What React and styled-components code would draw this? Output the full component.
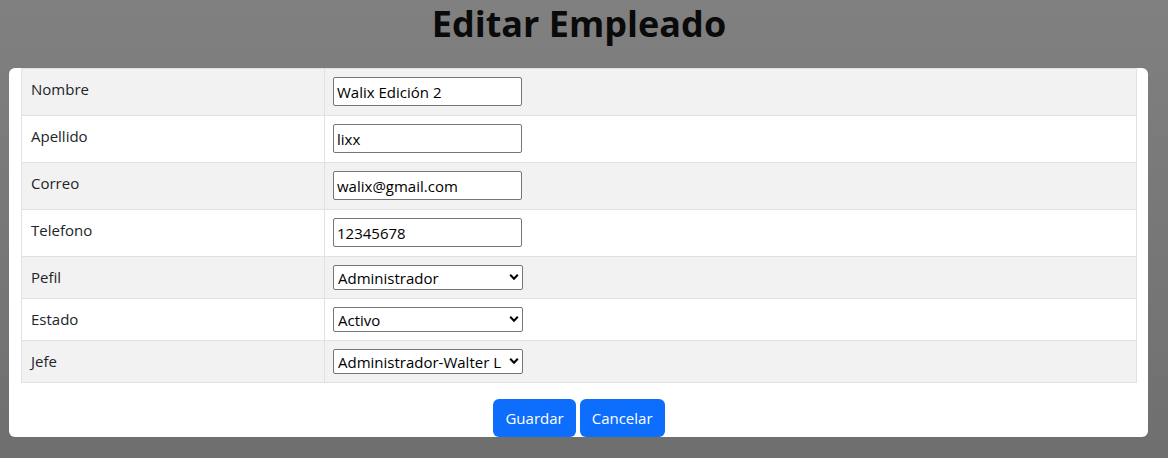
import React from "react";
import styled, { createGlobalStyle } from "styled-components";

const Global = createGlobalStyle`
  html, body { margin: 0; padding: 0; }
  body {
    font-family: "Open Sans", "Noto Sans", "Liberation Sans", sans-serif;
    font-size: 16px;
    color: #212529;
  }
  * { box-sizing: border-box; }
`;

const Backdrop = styled.div`
  width: 1168px;
  height: 458px;
  background: linear-gradient(180deg, #808080 0%, #6f6f6f 100%);
  overflow: hidden;
`;

const Title = styled.h1`
  margin: 0 0 21px;
  padding: 0 10px 0 0;
  line-height: 47px;
  text-align: center;
  font-size: 36px;
  font-weight: 700;
  color: #0a0a0a;
`;

const Modal = styled.div`
  margin-left: 9px;
  width: 1139px;
  background: #fff;
  border-radius: 6px;
  padding: 0 11px 0 12px;
  overflow: hidden;
`;

const Table = styled.table`
  width: 1116px;
  border-collapse: collapse;
  margin-bottom: 16px;
`;

const Row = styled.tr`
  background: ${(p) => (p.$striped ? "#f2f2f2" : "#fff")};
  border-top: 1px solid #dee2e6;
  border-bottom: 1px solid #dee2e6;
`;

const Cell = styled.td`
  border-left: 1px solid #dee2e6;
  border-right: 1px solid #dee2e6;
  padding: 8px 8px 8px ${(p) => p.$pl || "8px"};
  vertical-align: top;
  line-height: 24px;
  font-size: 15px;
  width: ${(p) => p.$w || "auto"};
`;

const Input = styled.input`
  display: block;
  width: 189px;
  height: 29px;
  margin: 0 0 1px;
  padding: 0 3px;
  border: 1px solid #767676;
  border-radius: 2px;
  background: #fff;
  font-family: inherit;
  font-size: 15px;
  color: #000;
  outline: none;
`;

const SelectWrap = styled.span`
  position: relative;
  display: block;
  width: 190px;
  height: 25px;
`;

const Select = styled.select`
  appearance: none;
  display: block;
  width: 190px;
  height: 25px;
  margin: 0;
  padding: 0 20px 0 4px;
  border: 1px solid #767676;
  border-radius: 2px;
  background: #fff;
  font-family: inherit;
  font-size: 15px;
  color: #000;
  outline: none;
`;

const Chevron = styled.svg`
  position: absolute;
  right: 4px;
  top: 8px;
  width: 10px;
  height: 8px;
  pointer-events: none;
`;

const Actions = styled.div`
  display: flex;
  justify-content: center;
  gap: 4px;
`;

const Button = styled.button`
  height: 38px;
  padding: 0 12px;
  border: none;
  border-radius: 6px;
  background: #0d6efd;
  color: #fff;
  font-family: inherit;
  font-size: 15px;
  line-height: 38px;
  cursor: pointer;
`;

const fields = [
  { label: "Nombre", value: "Walix Edición 2" },
  { label: "Apellido", value: "lixx" },
  { label: "Correo", value: "walix@gmail.com" },
  { label: "Telefono", value: "12345678" },
  { label: "Pefil", select: "Administrador" },
  { label: "Estado", select: "Activo" },
  { label: "Jefe", select: "Administrador-Walter Lixx" },
];

const Dropdown = ({ value }) => (
  <SelectWrap>
    <Select defaultValue={value}>
      <option>{value}</option>
    </Select>
    <Chevron viewBox="0 0 10 8">
      <path d="M1.2 1.8 L5 5.8 L8.8 1.8" fill="none" stroke="#000" strokeWidth="2" />
    </Chevron>
  </SelectWrap>
);

export default function App() {
  return (
    <>
      <Global />
      <Backdrop>
        <Title>Editar Empleado</Title>
        <Modal>
          <Table>
            <tbody>
              {fields.map((f, i) => (
                <Row key={f.label} $striped={i % 2 === 0}>
                  <Cell $w="303px" $pl="9px">{f.label}</Cell>
                  <Cell>
                    {f.select ? (
                      <Dropdown value={f.select} />
                    ) : (
                      <Input defaultValue={f.value} />
                    )}
                  </Cell>
                </Row>
              ))}
            </tbody>
          </Table>
          <Actions>
            <Button>Guardar</Button>
            <Button>Cancelar</Button>
          </Actions>
        </Modal>
      </Backdrop>
    </>
  );
}
